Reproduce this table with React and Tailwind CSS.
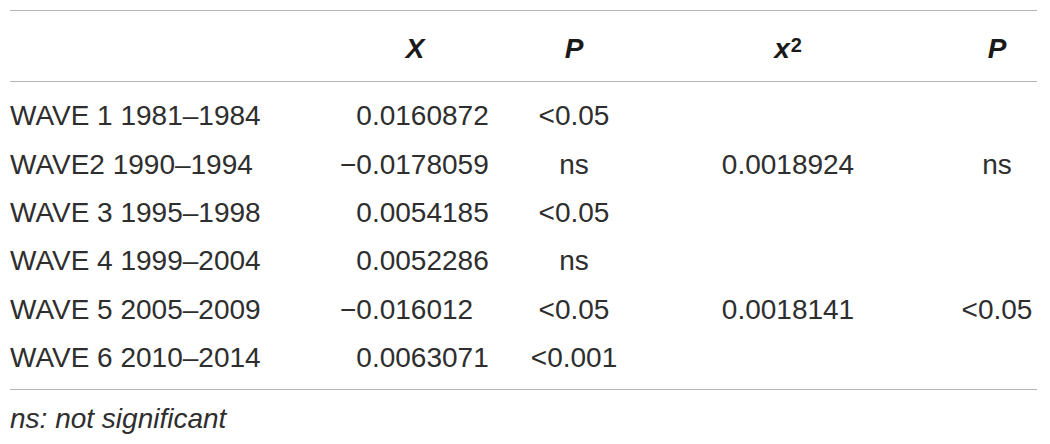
export default function App() {
  const rows = [
    ["WAVE 1 1981–1984", "0.0160872", false, "<0.05", "", ""],
    ["WAVE2 1990–1994", "0.0178059", true, "ns", "0.0018924", "ns"],
    ["WAVE 3 1995–1998", "0.0054185", false, "<0.05", "", ""],
    ["WAVE 4 1999–2004", "0.0052286", false, "ns", "", ""],
    ["WAVE 5 2005–2009", "0.016012", true, "<0.05", "0.0018141", "<0.05"],
    ["WAVE 6 2010–2014", "0.0063071", false, "<0.001", "", ""],
  ];
  return (
    <div
      className="w-[1050px] h-[444px] bg-white text-[#2e2e2e] text-[28px] leading-none pl-[10px] pr-[13px]"
      style={{ fontFamily: '"Liberation Sans", Arial, sans-serif' }}
    >
      <div className="pt-[10px]">
        <div className="border-t border-[#b5b5b5]" />
        <div className="grid grid-cols-[320px_170px_148px_280px_109px] h-[70px] pt-[5px] items-center font-bold italic text-[#1a1a1a]">
          <div />
          <div className="text-center">X</div>
          <div className="text-center">P</div>
          <div className="text-center">
            x<sup className="text-[20px] not-italic relative -top-[6px] ml-[1px]">2</sup>
          </div>
          <div className="text-center pl-[29px]">P</div>
        </div>
        <div className="border-t border-[#b5b5b5]" />
        <div className="pt-[10px] pb-[7px]">
          {rows.map((r, i) => (
            <div
              key={i}
              className="grid grid-cols-[320px_170px_148px_280px_109px] h-[48.4px] items-center"
            >
              <div>{r[0]}</div>
              <div className="pl-[10px]">
                <span className={r[2] ? "" : "invisible"}>−</span>
                {r[1]}
              </div>
              <div className="text-center">{r[3]}</div>
              <div className="text-center">{r[4]}</div>
              <div className="text-center pl-[29px]">{r[5]}</div>
            </div>
          ))}
        </div>
        <div className="border-t border-[#b5b5b5]" />
        <div className="pt-[15px] italic">ns: not significant</div>
      </div>
    </div>
  );
}
